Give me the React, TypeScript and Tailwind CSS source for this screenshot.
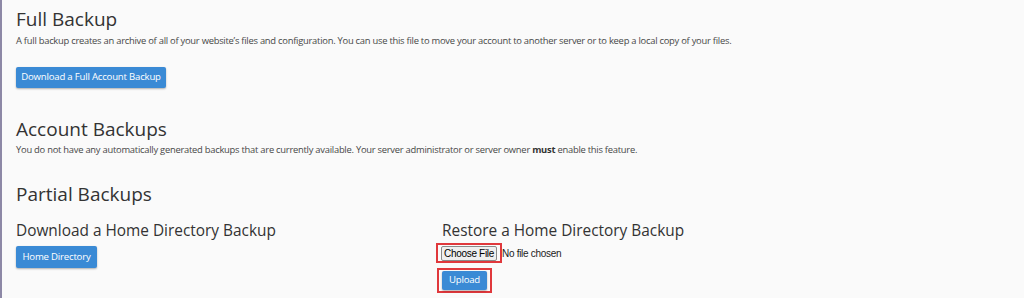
import React from 'react'

const font = { fontFamily: '"Open Sans", "Liberation Sans", Arial, sans-serif' }
const arial = { fontFamily: '"Liberation Sans", Arial, sans-serif' }

function BlueButton({ children, className = '' }: { children: React.ReactNode; className?: string }) {
  return (
    <button
      className={`flex items-center justify-center whitespace-nowrap rounded-[2px] bg-[#3a8ad5] text-white text-[9.6px] tracking-[-0.2px] shadow-[0_1px_2px_rgba(0,0,0,0.3)] ${className}`}
    >
      {children}
    </button>
  )
}

export default function App() {
  return (
    <div
      className="h-[298px] w-full overflow-hidden bg-[#fafafa] border-l-2 border-[#8d88a6] pl-[14px] text-[#333]"
      style={font}
    >
      {/* Full backup */}
      <h2 className="pt-[7px] text-[19px] leading-[24px]">Full Backup</h2>
      <p className="mt-[2px] text-[9.4px] leading-[16px] tracking-[-0.25px] text-[#484848]">
        A full backup creates an archive of all of your website’s files and configuration. You can use this file to move your account to another server or to keep a local copy of your files.
      </p>
      <BlueButton className="mt-[18px] h-[21px] w-[150px]">Download a Full Account Backup</BlueButton>

      {/* Account backups */}
      <h2 className="mt-[29px] text-[19px] leading-[24px]">Account Backups</h2>
      <p className="mt-[1px] text-[9.4px] leading-[16px] tracking-[-0.25px] text-[#484848]">
        You do not have any automatically generated backups that are currently available. Your server administrator or server owner <b className="font-bold text-[#333]">must</b> enable this feature.
      </p>

      {/* Partial backups */}
      <h2 className="mt-[24px] text-[19px] leading-[24px]">Partial Backups</h2>
      <div className="mt-[15px] flex">
        <div className="w-[426px]">
          <h3 className="text-[15.4px] leading-[20px]">Download a Home Directory Backup</h3>
          <BlueButton className="mt-[5px] h-[22px] w-[81px]">Home Directory</BlueButton>
        </div>
        <div>
          <h3 className="text-[15.4px] leading-[20px]">Restore a Home Directory Backup</h3>
          <div className="mt-[2px] flex items-center">
            <div className="-ml-[6px] flex h-[20px] w-[66px] items-center justify-center border-2 border-[#e0383c]">
              <span
                className="flex h-[15px] w-[56px] items-center justify-center rounded-[2px] border border-[#8a8a8a] bg-[#efefef] text-[10px] tracking-[-0.3px] text-black"
                style={arial}
              >
                Choose File
              </span>
            </div>
            <span className="text-[10px] tracking-[-0.3px] text-[#222]" style={arial}>
              No file chosen
            </span>
          </div>
          <div className="mt-[5px] -ml-[5px] flex h-[25px] w-[55px] items-center justify-center border-2 border-[#e0383c]">
            <BlueButton className="h-[19px] w-[45px]">Upload</BlueButton>
          </div>
        </div>
      </div>
    </div>
  )
}
